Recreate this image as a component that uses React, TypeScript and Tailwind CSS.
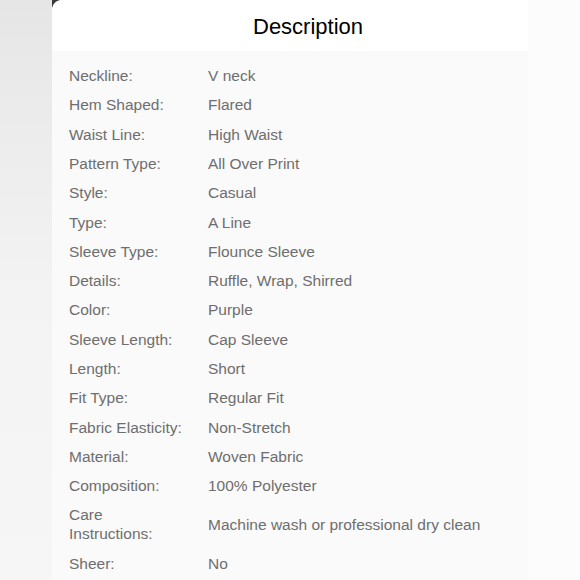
const specs: { label: string; value: string }[] = [
  { label: "Neckline:", value: "V neck" },
  { label: "Hem Shaped:", value: "Flared" },
  { label: "Waist Line:", value: "High Waist" },
  { label: "Pattern Type:", value: "All Over Print" },
  { label: "Style:", value: "Casual" },
  { label: "Type:", value: "A Line" },
  { label: "Sleeve Type:", value: "Flounce Sleeve" },
  { label: "Details:", value: "Ruffle, Wrap, Shirred" },
  { label: "Color:", value: "Purple" },
  { label: "Sleeve Length:", value: "Cap Sleeve" },
  { label: "Length:", value: "Short" },
  { label: "Fit Type:", value: "Regular Fit" },
  { label: "Fabric Elasticity:", value: "Non-Stretch" },
  { label: "Material:", value: "Woven Fabric" },
  { label: "Composition:", value: "100% Polyester" },
  { label: "Care Instructions:", value: "Machine wash or professional dry clean" },
  { label: "Sheer:", value: "No" },
];

const App = () => {
  return (
    <main
      className="flex w-[580px] h-[580px] overflow-hidden bg-[#fcfcfc]"
      style={{ fontFamily: '"Liberation Sans", Arial, sans-serif' }}
    >
      <div className="w-[52px] shrink-0 bg-gradient-to-b from-[#e6e6e6] via-[#f3f3f3] to-[#f6f6f6]" />

      <section className="relative w-[476px] shrink-0 flex flex-col">
        <svg
          className="absolute left-0 top-0"
          width="8"
          height="8"
          viewBox="0 0 8 8"
        >
          <path d="M0 0 H8 Q2 1 0 8 Z" fill="#3a3a3a" />
        </svg>
        <header className="h-[51px] shrink-0 bg-white flex items-center pl-[201px]">
          <h2 className="text-[22px] leading-none text-black pt-[3px]">Description</h2>
        </header>

        <div className="flex-1 bg-[#fafafa] pl-[17px] pt-[10px]">
          {specs.map((s) => (
            <div
              key={s.label}
              className="flex items-center py-[5.15px] text-[15.5px] leading-[19px] text-[#6e6e6e]"
            >
              <span className="w-[139px] shrink-0 pr-[22px]">{s.label}</span>
              <span>{s.value}</span>
            </div>
          ))}
        </div>
      </section>

      <div className="flex-1 bg-[#fcfcfc]" />
    </main>
  );
};

export default App;
